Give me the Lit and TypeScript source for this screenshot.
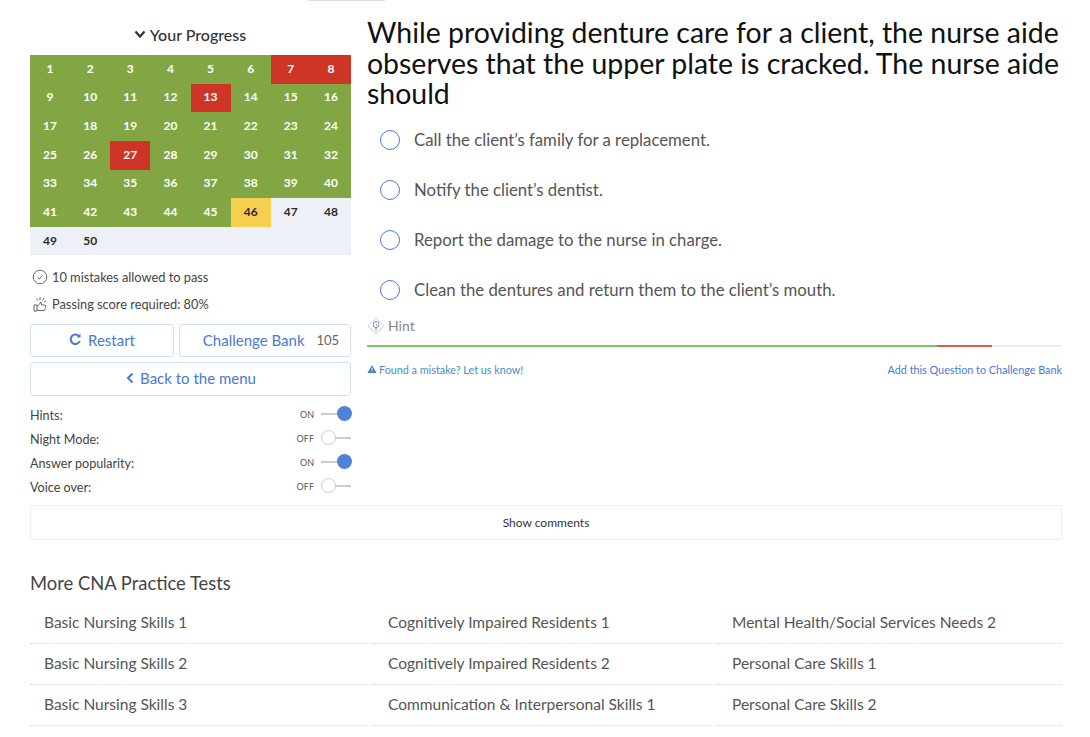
import { LitElement, html, css } from "lit";
import { customElement } from "lit/decorators.js";

const RED = new Set([7, 8, 13, 27]);
const TESTS = [
  "Basic Nursing Skills 1", "Cognitively Impaired Residents 1", "Mental Health/Social Services Needs 2",
  "Basic Nursing Skills 2", "Cognitively Impaired Residents 2", "Personal Care Skills 1",
  "Basic Nursing Skills 3", "Communication & Interpersonal Skills 1", "Personal Care Skills 2",
];
const ANSWERS = [
  "Call the client’s family for a replacement.",
  "Notify the client’s dentist.",
  "Report the damage to the nurse in charge.",
  "Clean the dentures and return them to the client’s mouth.",
];
const TOGGLES: [string, boolean][] = [["Hints:", true], ["Night Mode:", false], ["Answer popularity:", true], ["Voice over:", false]];

@customElement("app-root")
export class AppRoot extends LitElement {
  static styles = css`
    :host { display: block; position: relative; width: 1090px; height: 737px; overflow: hidden; background: #fff; font-family: Lato, "Open Sans", sans-serif; color: #444; }
    .topbar { position: absolute; left: 308px; top: 0; width: 77px; height: 1px; background: #ddd; }
    .page { padding: 0 28px 0 30px; display: flex; flex-direction: column; }
    .main { display: flex; gap: 16px; height: 505px; }
    .left { width: 321px; flex: none; }
    .title { height: 55px; display: flex; align-items: center; justify-content: center; gap: 4px; padding-top: 13px; padding-right: 1px; box-sizing: border-box; font-size: 16px; font-weight: 500; color: #333; }
    .grid { display: grid; grid-template-columns: repeat(8, 1fr); grid-auto-rows: 28.67px; background: #eef0f7; height: 200px; }
    .cell { display: flex; align-items: center; justify-content: center; padding-bottom: 2px; box-sizing: border-box; font-size: 12px; font-weight: 700; color: #2b2b2b; }
    .g { background: #83a644; color: #fff; }
    .r { background: #ce3527; color: #fff; }
    .y { background: #f7cf4f; }
    .info { display: flex; align-items: center; gap: 3px; font-size: 12.8px; color: #444; height: 27px; }
    .infos { margin-top: 8px; }
    .info svg { flex: none; width: 18px; height: 18px; margin-left: 1px; }
    .btnrow { display: flex; gap: 5px; margin-top: 7px; }
    .btn { box-sizing: border-box; height: 34px; padding-bottom: 2px; border: 1px solid #d3e0f2; border-radius: 3px; display: flex; align-items: center; justify-content: center; gap: 6px; color: #4a78d6; font-size: 15px; }
    .restart { width: 144px; height: 33px; }
    .bank { flex: 1; height: 33px; gap: 12px; padding-left: 12px; }
    .count { color: #666; font-size: 13px; }
    .back { margin-top: 5px; padding-left: 1px; }
    .toggles { margin-top: 6px; }
    .tog { height: 24px; display: flex; align-items: center; justify-content: space-between; font-size: 12.6px; color: #444; }
    .lbl { padding-top: 2px; }
    .sw { display: flex; align-items: center; gap: 7px; font-size: 9px; color: #555; }
    .track { position: relative; width: 30px; height: 2px; background: #ccc; }
    .knob { position: absolute; top: -7px; width: 15px; height: 15px; border-radius: 50%; box-sizing: border-box; }
    .on .knob { right: -1px; background: #4f83d9; }
    .off .knob { left: 0; background: #fff; border: 1.5px solid #ccc; }
    .right { flex: 1; min-width: 0; padding-top: 17px; }
    h1 { margin: 0; font-size: 28.45px; line-height: 30.5px; font-weight: 400; color: #111; }
    .answers { margin-top: 6px; }
    .ans { height: 50px; display: flex; align-items: center; gap: 14px; padding-left: 13px; font-size: 16.75px; color: #555; }
    .radio { width: 20px; height: 20px; box-sizing: border-box; border: 1.5px solid #4a78d6; border-radius: 50%; flex: none; }
    .hint { display: flex; align-items: center; gap: 3px; font-size: 14px; color: #888; height: 22px; }
    .progress { display: flex; height: 2px; margin-top: 8px; background: #eee; }
    .pg { width: 570px; background: #7fc66b; }
    .pr { width: 55px; background: #e2574c; }
    .links { display: flex; justify-content: space-between; margin-top: 16px; font-size: 10.8px; color: #3f8fc9; }
    .links .add { color: #4a78d6; }
    .warn { display: inline-flex; align-items: center; gap: 2px; }
    .comments { box-sizing: border-box; height: 35px; padding-bottom: 1px; border: 1px solid #eee; border-radius: 2px; display: flex; align-items: center; justify-content: center; font-size: 12px; color: #333; width: 1032px; }
    h2 { margin: 32px 0 0; font-size: 18.4px; line-height: 22px; font-weight: 400; color: #444; }
    .tests { display: grid; grid-template-columns: 344px 344px 344px; width: 1032px; margin-top: 9px; }
    .test { box-sizing: border-box; height: 41px; padding: 0 0 2px 14px; display: flex; align-items: center; font-size: 15.5px; color: #555; border-bottom: 1px dotted #ddd; }
  `;

  render() {
    const cells = Array.from({ length: 50 }, (_, i) => i + 1);
    const cls = (n: number) => (RED.has(n) ? "r" : n === 46 ? "y" : n > 46 ? "" : "g");
    return html`
      <div class="topbar"></div>
      <div class="page">
        <div class="main">
          <div class="left">
            <div class="title">
              <svg width="12" height="9" viewBox="0 0 12 9"><path d="M1.500 1.500 6 6.500l4.500-5" fill="none" stroke="#333" stroke-width="2.200"/></svg>
              Your Progress
            </div>
            <div class="grid">${cells.map((n) => html`<div class="cell ${cls(n)}">${n}</div>`)}</div>
            <div class="infos">
              <div class="info">
                <svg viewBox="0 0 18 18"><circle cx="9" cy="9" r="6.800" fill="none" stroke="#666" stroke-width="1"/><path d="M6.500 9.300 8.300 11l3.200-3.600" fill="none" stroke="#666" stroke-width="1"/></svg>
                10 mistakes allowed to pass
              </div>
              <div class="info">
                <svg viewBox="0 0 18 18" fill="none" stroke="#666" stroke-width="1"><path d="M3 10h3v6H3zM6 11c2-1 3-2 3.500-4 1 .2 1.200 1.300.8 3H14c1 0 1 2 0 2.200.8.300.6 1.700-.2 1.800.3.800-.1 1.500-.8 1.500H8c-1 0-1.500-.3-2-.5"/><path d="M9 2v3M5.500 3.500l1.500 2M13 3l-1.500 2.500M15 6l-2 1"/></svg>
                Passing score required: 80%
              </div>
            </div>
            <div class="btnrow">
              <div class="btn restart">
                <svg width="13" height="13" viewBox="0 0 13 13" fill="none" stroke="#4a78d6" stroke-width="2"><path d="M10.800 8A4.700 4.700 0 1 1 10 3.200"/><path d="M11.500 .5v4h-4z" fill="#4a78d6" stroke="none"/></svg>
                Restart
              </div>
              <div class="btn bank">Challenge Bank <span class="count">105</span></div>
            </div>
            <div class="btn back">
              <svg width="8" height="12" viewBox="0 0 8 12"><path d="M6.500 1.500 2 6l4.500 4.500" fill="none" stroke="#4a78d6" stroke-width="2"/></svg>
              Back to the menu
            </div>
            <div class="toggles">
              ${TOGGLES.map(([label, on]) => html`
                <div class="tog">
                  <span class="lbl">${label}</span>
                  <span class="sw ${on ? "on" : "off"}">${on ? "ON" : "OFF"}<span class="track"><span class="knob"></span></span></span>
                </div>`)}
            </div>
          </div>
          <div class="right">
            <h1>While providing denture care for a client, the nurse aide observes that the upper plate is cracked. The nurse aide should</h1>
            <div class="answers">
              ${ANSWERS.map((a) => html`<div class="ans"><span class="radio"></span>${a}</div>`)}
            </div>
            <div class="hint">
              <svg width="18" height="18" viewBox="0 0 18 18" fill="none"><path d="M9 1l8 8-8 8-8-8z" stroke="#c9d6ee"/><circle cx="9" cy="7.500" r="3" stroke="#6f8fd0"/><path d="M9 7.500c1 0 1 1 0 1M9 10.500V14" stroke="#6f8fd0"/></svg>
              Hint
            </div>
            <div class="progress"><div class="pg"></div><div class="pr"></div></div>
            <div class="links">
              <span class="warn"><svg width="10" height="10" viewBox="0 0 10 10"><path d="M5 1 9.500 9h-9z" fill="#3f7fb5"/><path d="M5 3.500V6.500M5 7.300V8" stroke="#fff"/></svg> Found a mistake? Let us know!</span>
              <span class="add">Add this Question to Challenge Bank</span>
            </div>
          </div>
        </div>
        <div class="comments">Show comments</div>
        <h2>More CNA Practice Tests</h2>
        <div class="tests">${TESTS.map((t) => html`<div class="test">${t}</div>`)}</div>
      </div>
    `;
  }
}
